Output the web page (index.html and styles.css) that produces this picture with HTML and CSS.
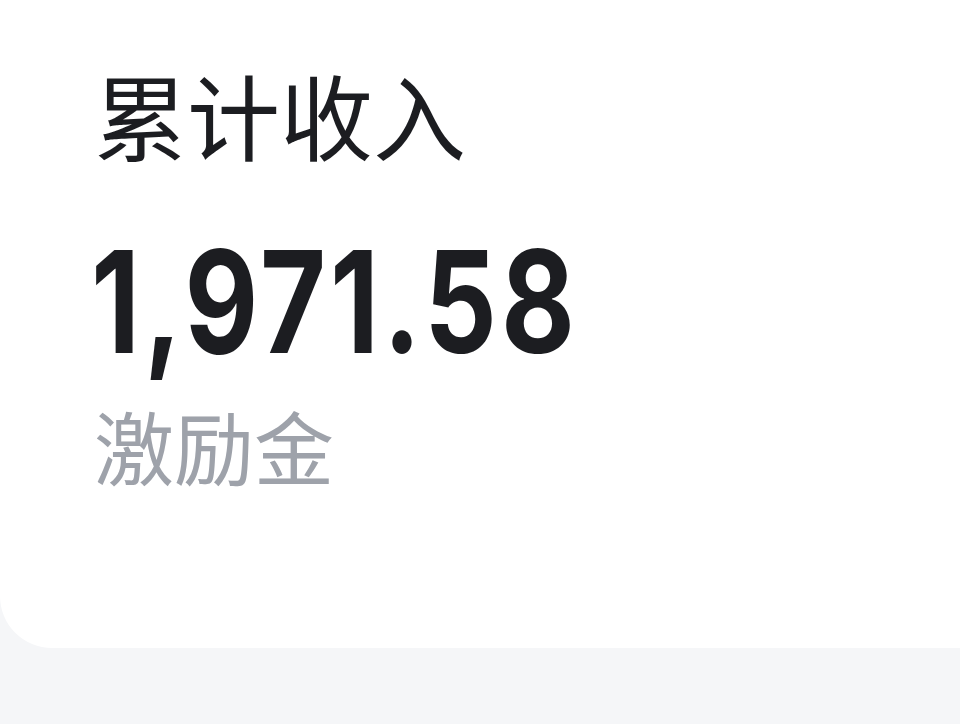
FILE: index.html
```html
<!DOCTYPE html>
<html lang="zh">
<head>
<meta charset="utf-8">
<link rel="stylesheet" href="styles.css">
</head>
<body>
<div class="page">
  <section class="card">
    <div class="title">累计收入</div>
    <div class="amount">1,971.58</div>
    <div class="unit">激励金</div>
  </section>
</div>
</body>
</html>
```
FILE: styles.css
```css
html, body {
  margin: 0;
  padding: 0;
  background: #f5f6f8;
}
.page {
  width: 960px;
  height: 724px;
  overflow: hidden;
}
.card {
  background: #ffffff;
  height: 648px;
  border-bottom-left-radius: 52px;
  box-sizing: border-box;
  padding: 62px 0 0 94px;
  display: flex;
  flex-direction: column;
  font-family: "Noto Sans CJK SC", "Noto Sans", sans-serif;
}
.title {
  font-size: 93px;
  line-height: 104px;
  color: #1c1d21;
}
.amount {
  font-family: Inter, "Noto Sans", sans-serif;
  font-weight: 700;
  font-size: 142px;
  line-height: 150px;
  color: #1c1d21;
  letter-spacing: 5px;
  margin-top: 60px;
  margin-left: -3px;
  transform: scaleX(0.8);
  transform-origin: left center;
}
.unit {
  font-size: 80px;
  line-height: 96px;
  color: #9ea2aa;
  margin-top: 20px;
}
```
